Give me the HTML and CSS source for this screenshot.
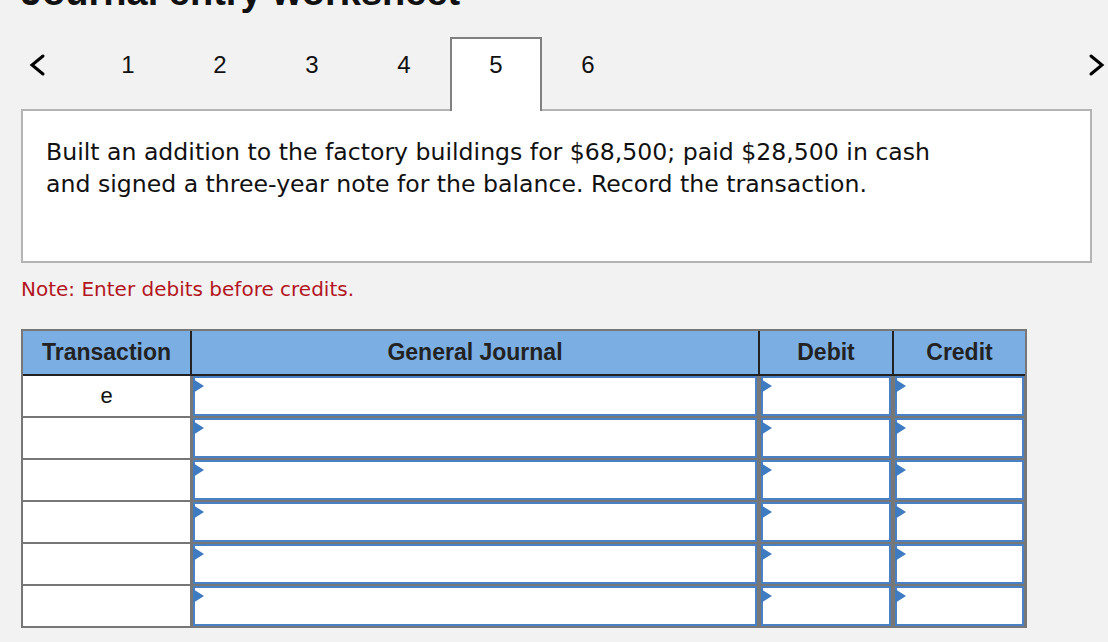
FILE: index.html
```html
<!DOCTYPE html>
<html lang="en">
<head>
<meta charset="utf-8">
<title>Journal entry worksheet</title>
<link rel="stylesheet" href="styles.css">
</head>
<body>
<div class="page">
  <h1 class="title">Journal entry worksheet</h1>

  <nav class="steps">
    <span class="arrow prev">
      <svg width="18" height="24" viewBox="0 0 18 24"><polyline points="15,3 4,12 15,21" fill="none" stroke="#000" stroke-width="3" stroke-linecap="round" stroke-linejoin="miter"/></svg>
    </span>
    <span class="tab">1</span>
    <span class="tab">2</span>
    <span class="tab">3</span>
    <span class="tab">4</span>
    <span class="tab active">5</span>
    <span class="tab">6</span>
    <span class="arrow next">
      <svg width="18" height="24" viewBox="0 0 18 24"><polyline points="3,3 14,12 3,21" fill="none" stroke="#000" stroke-width="3" stroke-linecap="round" stroke-linejoin="miter"/></svg>
    </span>
  </nav>

  <div class="prompt">
    <p>Built an addition to the factory buildings for $68,500; paid $28,500 in cash and signed a three-year note for the balance. Record the transaction.</p>
  </div>

  <p class="note">Note: Enter debits before credits.</p>

  <div class="journal">
    <div class="jhead">
      <div>Transaction</div>
      <div>General Journal</div>
      <div>Debit</div>
      <div>Credit</div>
    </div>
    <div class="jrow">
      <div class="trans">e</div>
      <div class="entry"><div class="field"></div></div>
      <div class="entry"><div class="field"></div></div>
      <div class="entry"><div class="field"></div></div>
    </div>
    <div class="jrow">
      <div class="trans"></div>
      <div class="entry"><div class="field"></div></div>
      <div class="entry"><div class="field"></div></div>
      <div class="entry"><div class="field"></div></div>
    </div>
    <div class="jrow">
      <div class="trans"></div>
      <div class="entry"><div class="field"></div></div>
      <div class="entry"><div class="field"></div></div>
      <div class="entry"><div class="field"></div></div>
    </div>
    <div class="jrow">
      <div class="trans"></div>
      <div class="entry"><div class="field"></div></div>
      <div class="entry"><div class="field"></div></div>
      <div class="entry"><div class="field"></div></div>
    </div>
    <div class="jrow">
      <div class="trans"></div>
      <div class="entry"><div class="field"></div></div>
      <div class="entry"><div class="field"></div></div>
      <div class="entry"><div class="field"></div></div>
    </div>
    <div class="jrow">
      <div class="trans"></div>
      <div class="entry"><div class="field"></div></div>
      <div class="entry"><div class="field"></div></div>
      <div class="entry"><div class="field"></div></div>
    </div>
  </div>
</div>
</body>
</html>
```

FILE: styles.css
```css
html, body {
  margin: 0;
  padding: 0;
  background: #f2f2f2;
  overflow: hidden;
}

.page {
  padding: 0 0 0 21px;
  font-family: "Liberation Sans", Arial, sans-serif;
  color: #000;
}

.title {
  margin: -30px 0 0;
  font-size: 38px;
  line-height: 44px;
  font-weight: bold;
  color: #111;
}

.steps {
  display: flex;
  align-items: flex-start;
  height: 74px;
  margin: 23px 0 -2px;
  position: relative;
  z-index: 1;
}

.arrow {
  display: block;
  padding-top: 16px;
}

.arrow svg {
  display: block;
}

.prev {
  width: 54px;
  padding-left: 7px;
}

.next {
  margin-left: auto;
  margin-right: 2px;
}

.tab {
  box-sizing: border-box;
  width: 92px;
  height: 74px;
  border: 2px solid transparent;
  border-bottom: none;
  padding-top: 12px;
  text-align: center;
  font-size: 24px;
  line-height: 28px;
  color: #111;
}

.tab.active {
  background: #fff;
  border-color: #808080;
}

.prompt {
  box-sizing: border-box;
  width: 1071px;
  height: 154px;
  border: 2px solid #b4b4b4;
  background: #fff;
  padding: 25px 23px 0;
}

.prompt p {
  margin: 0;
  max-width: 910px;
  font-family: "DejaVu Sans", Verdana, sans-serif;
  font-size: 23.6px;
  line-height: 32px;
  color: #111;
}

.note {
  margin: 14px 0 0;
  font-family: "DejaVu Sans", Verdana, sans-serif;
  font-size: 20px;
  line-height: 24px;
  color: #b3161f;
}

.journal {
  box-sizing: border-box;
  width: 1006px;
  margin-top: 28px;
  border: 2px solid #777;
  background: #777;
}

.jhead,
.jrow {
  display: grid;
  grid-template-columns: 167px 566px 132px 131px;
  column-gap: 2px;
}

.jhead {
  background: #222;
  border-bottom: 2px solid #222;
}

.jhead > div {
  height: 43px;
  display: flex;
  align-items: center;
  justify-content: center;
  background: #7baee2;
  font-size: 23px;
  font-weight: bold;
  color: #222;
}

.jrow + .jrow {
  margin-top: 2px;
}

.trans {
  height: 40px;
  background: #fff;
  display: flex;
  align-items: center;
  justify-content: center;
  font-size: 22px;
  color: #111;
}

.entry {
  height: 40px;
}

.field {
  position: relative;
  box-sizing: border-box;
  height: 100%;
  margin-right: 1px;
  margin-left: 1px;
  border: 2px solid #4a80c4;
  background: #fff;
}

.field::before {
  content: "";
  position: absolute;
  left: -2px;
  top: 1px;
  border-left: 11px solid #3f7bc0;
  border-top: 7px solid transparent;
  border-bottom: 7px solid transparent;
}
```
